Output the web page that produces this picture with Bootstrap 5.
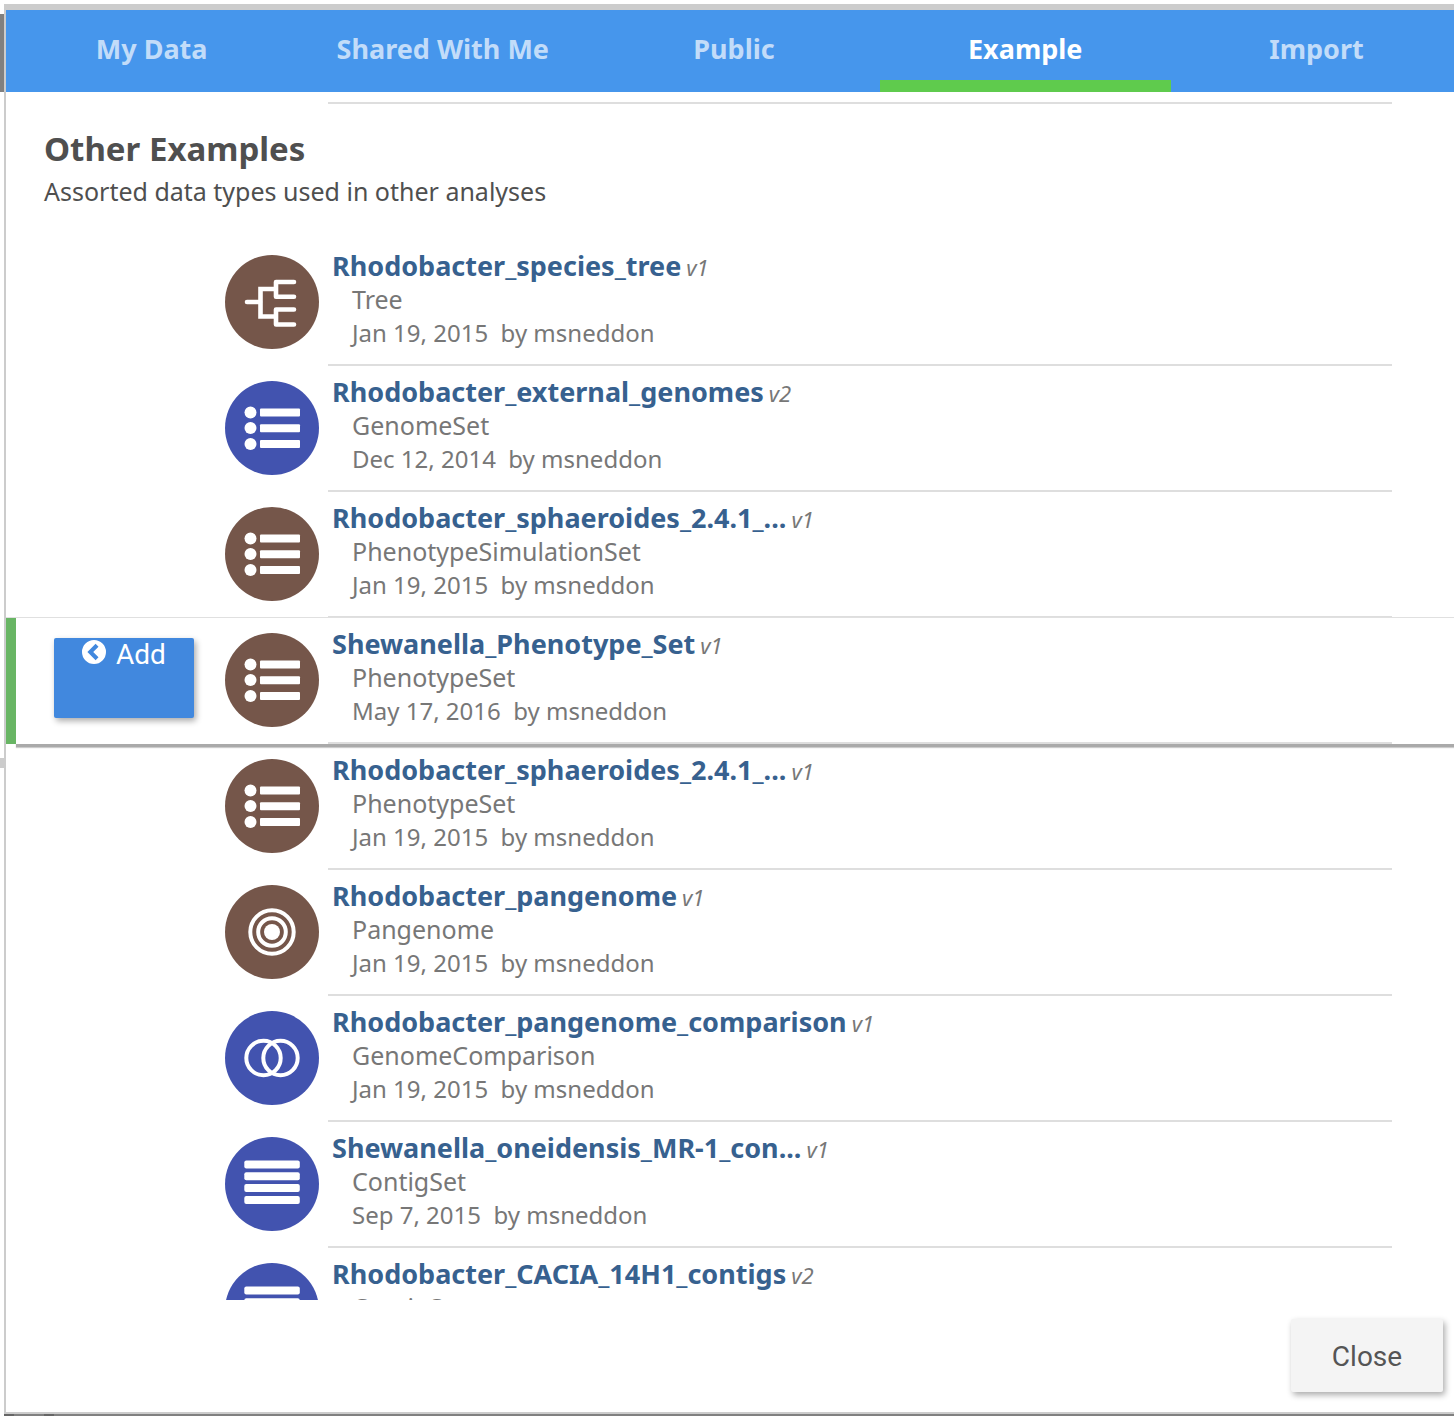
<!DOCTYPE html>
<html lang="en">
<head>
<meta charset="utf-8">
<meta name="viewport" content="width=device-width, initial-scale=1">
<title>Data Browser</title>
<link rel="stylesheet" href="https://cdn.jsdelivr.net/npm/bootstrap@5.3.0/dist/css/bootstrap.min.css">
<style>
body{font-family:"Noto Sans",sans-serif;font-size:25px;line-height:34px;color:#4f4f4f;background:#fff}
.page-edge{width:4px;background:linear-gradient(#ccc,#ccc) 0 744px/4px 10px no-repeat,linear-gradient(#808080,#808080) 0 0/4px 78px no-repeat;margin-top:10px}
.slide-panel{border:2px solid #ccc;border-top-width:6px;border-right:0;min-width:0}
.backdrop-strip{height:2px;background:linear-gradient(#666,#666) 0 0/10px 2px no-repeat,linear-gradient(#666,#666) 40px 0/10px 2px no-repeat,#808080}
.tab-bar{background:#4696ec;height:82px;margin-right:-8px}
.tab-bar a{color:#c2dcf9;font-weight:700;font-size:27px;text-decoration:none;border-bottom:12px solid transparent;padding-top:8px}
.tab-bar a.active{color:#fff;border-color:#5fcb4d}
.section-rule{margin:10px 62px 0 322px;height:2px;background:#dedede}
.group-title{font-size:33px;line-height:44px;font-weight:700;margin:23px 0 3px}
.group-head{padding-left:38px;height:136px}
.data-row{height:126px;border-left:10px solid transparent}
.data-row.hovered{border-left-color:#68b564;box-shadow:0 -1px 0 #e0e0e0,10px 3px 0 #aaa,10px 4px 1px #ccc;position:relative}
.action-cell{width:209px;padding:20px 0 0 38px}
.type-icon{width:94px;height:94px;margin-top:15px;display:block}
.row-text{margin:0 62px 0 9px;padding:9px 4px 0;border-bottom:2px solid #dedede;min-width:0}
.row-name{height:33px}
.row-text a{color:#37618f;font-weight:700;font-size:27px;text-decoration:none}
.row-text i{font-size:22px;color:#777;margin-left:5px}
.row-meta{color:#777;padding-left:20px}
.row-date{font-size:24px;white-space:pre}
.btn.add-button{width:140px;height:80px;background:#4188de;color:#fff;font:28px/34px Roboto,sans-serif;border-radius:2px;border:0;box-shadow:2px 3px 6px #0005;padding:0}
.add-button svg{width:24px;height:24px;margin:2px 10px 0 0}
.btn.close-button{background:#f4f4f4;color:#555;font:28px/34px Roboto,sans-serif;border:0;border-radius:2px;width:152px;height:73px;padding:8px 0 6px;box-shadow:2px 3px 6px #0005}
.panel-footer{height:112px;padding:19px 11px 0 0}
</style>
<script src="https://cdn.jsdelivr.net/npm/bootstrap@5.3.0/dist/js/bootstrap.bundle.min.js"></script>
</head>
<body class="vh-100 overflow-hidden d-flex flex-column pt-1">
<svg class="d-none" aria-hidden="true">
<symbol id="tree" viewBox="0 0 94 94"><g fill="none" stroke="#fff" stroke-width="4.600" stroke-linecap="round" stroke-linejoin="round"><path d="M22 47h13M69 27H51v14.700h18M69 54.500H51v15h18"/><path stroke-linecap="butt" stroke-linejoin="miter" d="M50 34H35.500v27.500H50"/></g></symbol>
<symbol id="set" viewBox="0 0 94 94"><g fill="#fff"><circle cx="25.500" cy="31.500" r="6"/><circle cx="25.500" cy="47" r="6"/><circle cx="25.500" cy="63" r="6"/><rect x="35" y="27.500" width="40" height="8" rx="1"/><rect x="35" y="43.300" width="40" height="8" rx="1"/><rect x="35" y="59" width="40" height="8" rx="1"/></g></symbol>
<symbol id="rings" viewBox="0 0 94 94"><circle cx="47" cy="47" r="8" fill="#fff"/><g fill="none" stroke="#fff" stroke-width="4"><circle cx="47" cy="47" r="13.800"/><circle cx="47" cy="47" r="21.700"/></g></symbol>
<symbol id="compare" viewBox="0 0 94 94"><g fill="none" stroke="#fff" stroke-width="4"><circle cx="38.500" cy="47" r="17.200"/><circle cx="55.500" cy="47" r="17.200"/></g></symbol>
<symbol id="contigs" viewBox="0 0 94 94"><g fill="#fff"><rect x="19.300" y="23.500" width="55.500" height="8" rx="2"/><rect x="19.300" y="35.300" width="55.500" height="8" rx="2"/><rect x="19.300" y="47" width="55.500" height="8" rx="2"/><rect x="19.300" y="58.900" width="55.500" height="8" rx="2"/></g></symbol>
</svg>
<div class="d-flex flex-grow-1 overflow-hidden">
<div class="page-edge flex-shrink-0"></div>
<main class="slide-panel flex-grow-1 d-flex flex-column overflow-hidden">
<nav class="tab-bar d-flex flex-shrink-0 text-center">
<a class="col d-flex align-items-center justify-content-center" href="#">My Data</a>
<a class="col d-flex align-items-center justify-content-center" href="#">Shared With Me</a>
<a class="col d-flex align-items-center justify-content-center" href="#">Public</a>
<a class="col d-flex align-items-center justify-content-center active" href="#" aria-current="page">Example</a>
<a class="col d-flex align-items-center justify-content-center" href="#">Import</a>
</nav>
<div class="flex-grow-1 overflow-hidden">
<div class="section-rule"></div>
<div class="group-head overflow-hidden"><h2 class="group-title">Other Examples</h2><div>Assorted data types used in other analyses</div></div>
<ul class="list-unstyled m-0">
<li class="data-row d-flex"><div class="action-cell flex-shrink-0"></div><svg class="type-icon flex-shrink-0"><circle cx="47" cy="47" r="47" fill="#75564a"/><use href="#tree"/></svg><div class="row-text flex-grow-1"><div class="row-name"><a href="#">Rhodobacter_species_tree</a><i>v1</i></div><div class="row-meta">Tree</div><div class="row-meta row-date">Jan 19, 2015  by msneddon</div></div></li>
<li class="data-row d-flex"><div class="action-cell flex-shrink-0"></div><svg class="type-icon flex-shrink-0"><circle cx="47" cy="47" r="47" fill="#4253af"/><use href="#set"/></svg><div class="row-text flex-grow-1"><div class="row-name"><a href="#">Rhodobacter_external_genomes</a><i>v2</i></div><div class="row-meta">GenomeSet</div><div class="row-meta row-date">Dec 12, 2014  by msneddon</div></div></li>
<li class="data-row d-flex"><div class="action-cell flex-shrink-0"></div><svg class="type-icon flex-shrink-0"><circle cx="47" cy="47" r="47" fill="#75564a"/><use href="#set"/></svg><div class="row-text flex-grow-1"><div class="row-name"><a href="#">Rhodobacter_sphaeroides_2.4.1_...</a><i>v1</i></div><div class="row-meta">PhenotypeSimulationSet</div><div class="row-meta row-date">Jan 19, 2015  by msneddon</div></div></li>
<li class="data-row hovered d-flex"><div class="action-cell flex-shrink-0"><button type="button" class="btn add-button d-flex align-items-start justify-content-center"><svg viewBox="0 0 24 24"><path fill="#fff" d="M12 0a12 12 0 1 0 0 24 12 12 0 0 0 0-24zm1.600 3.800 2.900 2.900L11.200 12l5.300 5.300-2.900 2.900L5.400 12z"/></svg>Add</button></div><svg class="type-icon flex-shrink-0"><circle cx="47" cy="47" r="47" fill="#75564a"/><use href="#set"/></svg><div class="row-text flex-grow-1"><div class="row-name"><a href="#">Shewanella_Phenotype_Set</a><i>v1</i></div><div class="row-meta">PhenotypeSet</div><div class="row-meta row-date">May 17, 2016  by msneddon</div></div></li>
<li class="data-row d-flex"><div class="action-cell flex-shrink-0"></div><svg class="type-icon flex-shrink-0"><circle cx="47" cy="47" r="47" fill="#75564a"/><use href="#set"/></svg><div class="row-text flex-grow-1"><div class="row-name"><a href="#">Rhodobacter_sphaeroides_2.4.1_...</a><i>v1</i></div><div class="row-meta">PhenotypeSet</div><div class="row-meta row-date">Jan 19, 2015  by msneddon</div></div></li>
<li class="data-row d-flex"><div class="action-cell flex-shrink-0"></div><svg class="type-icon flex-shrink-0"><circle cx="47" cy="47" r="47" fill="#75564a"/><use href="#rings"/></svg><div class="row-text flex-grow-1"><div class="row-name"><a href="#">Rhodobacter_pangenome</a><i>v1</i></div><div class="row-meta">Pangenome</div><div class="row-meta row-date">Jan 19, 2015  by msneddon</div></div></li>
<li class="data-row d-flex"><div class="action-cell flex-shrink-0"></div><svg class="type-icon flex-shrink-0"><circle cx="47" cy="47" r="47" fill="#4253af"/><use href="#compare"/></svg><div class="row-text flex-grow-1"><div class="row-name"><a href="#">Rhodobacter_pangenome_comparison</a><i>v1</i></div><div class="row-meta">GenomeComparison</div><div class="row-meta row-date">Jan 19, 2015  by msneddon</div></div></li>
<li class="data-row d-flex"><div class="action-cell flex-shrink-0"></div><svg class="type-icon flex-shrink-0"><circle cx="47" cy="47" r="47" fill="#4253af"/><use href="#contigs"/></svg><div class="row-text flex-grow-1"><div class="row-name"><a href="#">Shewanella_oneidensis_MR-1_con...</a><i>v1</i></div><div class="row-meta">ContigSet</div><div class="row-meta row-date">Sep 7, 2015  by msneddon</div></div></li>
<li class="data-row d-flex"><div class="action-cell flex-shrink-0"></div><svg class="type-icon flex-shrink-0"><circle cx="47" cy="47" r="47" fill="#4253af"/><use href="#contigs"/></svg><div class="row-text flex-grow-1"><div class="row-name"><a href="#">Rhodobacter_CACIA_14H1_contigs</a><i>v2</i></div><div class="row-meta">ContigSet</div></div></li>
</ul>
</div>
<footer class="panel-footer flex-shrink-0 d-flex justify-content-end"><button type="button" class="btn close-button">Close</button></footer>
</main>
</div>
<div class="backdrop-strip flex-shrink-0 ms-1"></div>
</body>
</html>
